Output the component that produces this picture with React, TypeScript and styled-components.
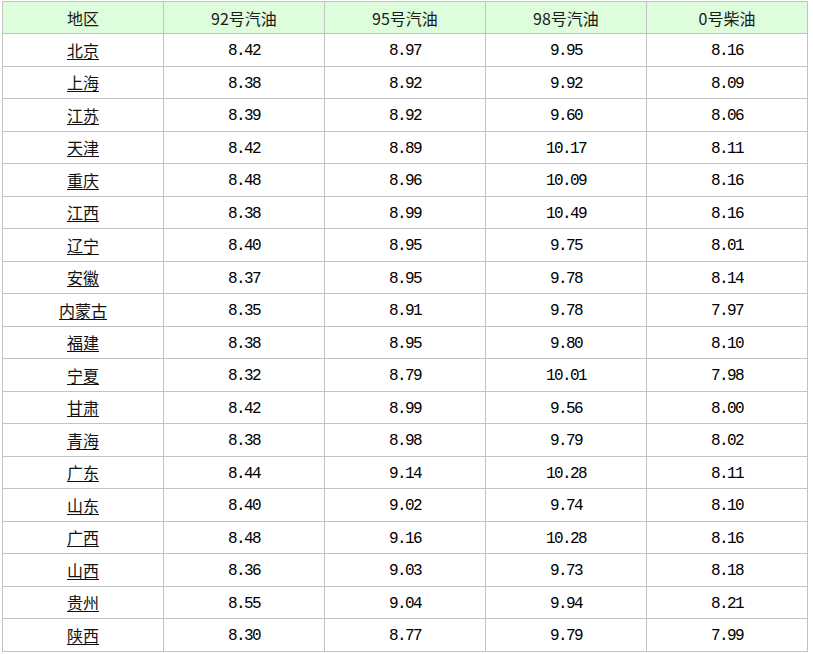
import React from "react";
import styled, { createGlobalStyle } from "styled-components";

const Global = createGlobalStyle`
  html, body { margin: 0; padding: 0; background: #fff; }
  body { font-family: "Noto Sans CJK SC", sans-serif; }
`;

const Wrap = styled.div`
  padding: 1px 0 0 2px;
`;

const Table = styled.table`
  border-collapse: collapse;
  table-layout: fixed;
  width: 806px;
  color: #000;
`;

const HeadCell = styled.th`
  width: 160px;
  height: 31px;
  padding: 0;
  background: #ddfddd;
  border: 1px solid #c3c3c3;
  font-family: "Noto Sans CJK SC", sans-serif;
  font-weight: normal;
  font-size: 16px;
  line-height: 20px;
  text-align: center;
  vertical-align: middle;
  color: #1a1a1a;
`;

const Row = styled.tr`
  height: 32.5px;
`;

const Cell = styled.td`
  padding: 0;
  border: 1px solid #c3c3c3;
  text-align: center;
  vertical-align: middle;
  font-size: 16px;
  line-height: 20px;
`;

const NumText = styled.span`
  font-family: "Liberation Mono", monospace;
  font-size: 16px;
  letter-spacing: -1.6px;
  color: #000;
`;

const RegionLink = styled.a`
  font-family: "Noto Sans CJK SC", sans-serif;
  font-size: 16px;
  color: #111;
  text-decoration: underline;
  text-underline-offset: 2px;
`;

const headers = ["地区", "92号汽油", "95号汽油", "98号汽油", "0号柴油"];

const rows: [string, string, string, string, string][] = [
  ["北京", "8.42", "8.97", "9.95", "8.16"],
  ["上海", "8.38", "8.92", "9.92", "8.09"],
  ["江苏", "8.39", "8.92", "9.60", "8.06"],
  ["天津", "8.42", "8.89", "10.17", "8.11"],
  ["重庆", "8.48", "8.96", "10.09", "8.16"],
  ["江西", "8.38", "8.99", "10.49", "8.16"],
  ["辽宁", "8.40", "8.95", "9.75", "8.01"],
  ["安徽", "8.37", "8.95", "9.78", "8.14"],
  ["内蒙古", "8.35", "8.91", "9.78", "7.97"],
  ["福建", "8.38", "8.95", "9.80", "8.10"],
  ["宁夏", "8.32", "8.79", "10.01", "7.98"],
  ["甘肃", "8.42", "8.99", "9.56", "8.00"],
  ["青海", "8.38", "8.98", "9.79", "8.02"],
  ["广东", "8.44", "9.14", "10.28", "8.11"],
  ["山东", "8.40", "9.02", "9.74", "8.10"],
  ["广西", "8.48", "9.16", "10.28", "8.16"],
  ["山西", "8.36", "9.03", "9.73", "8.18"],
  ["贵州", "8.55", "9.04", "9.94", "8.21"],
  ["陕西", "8.30", "8.77", "9.79", "7.99"],
];

export default function App() {
  return (
    <>
      <Global />
      <Wrap>
        <Table>
          <thead>
            <tr>
              {headers.map((h) => (
                <HeadCell key={h}>{h}</HeadCell>
              ))}
            </tr>
          </thead>
          <tbody>
            {rows.map((r) => (
              <Row key={r[0]}>
                <Cell>
                  <RegionLink href="#">{r[0]}</RegionLink>
                </Cell>
                {r.slice(1).map((v, i) => (
                  <Cell key={i}>
                    <NumText>{v}</NumText>
                  </Cell>
                ))}
              </Row>
            ))}
          </tbody>
        </Table>
      </Wrap>
    </>
  );
}
